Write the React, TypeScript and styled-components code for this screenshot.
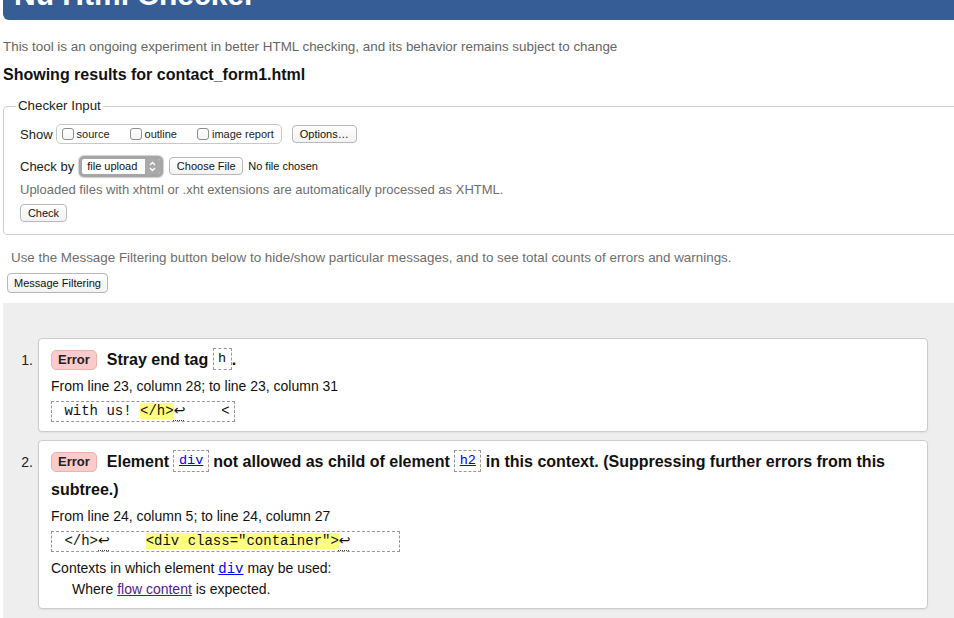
import React from "react";
import styled, { createGlobalStyle } from "styled-components";

const Global = createGlobalStyle`
  html, body { margin: 0; padding: 0; background: #fff; }
  body {
    font-family: "Liberation Sans", Arial, Helvetica, sans-serif;
    color: #1a1a1a;
    overflow: hidden;
  }
`;

const Page = styled.div`
  padding-left: 3px;
  width: 951px;
`;

const Header = styled.header`
  margin-top: -40px;
  height: 60px;
  box-sizing: border-box;
  background: #365d96;
  border-radius: 0 0 0 6px;
  display: flex;
  align-items: flex-end;
  padding: 0 0 10px 11px;
`;

const Title = styled.h1`
  margin: 0;
  font-size: 30px;
  line-height: 30px;
  font-weight: bold;
  color: #fff;
`;

const Intro = styled.p`
  margin: 18px 0 0;
  font-size: 13.4px;
  line-height: 18px;
  color: #666;
`;

const ResultsHeading = styled.h2`
  margin: 9px 0 0;
  font-size: 16px;
  line-height: 20px;
  font-weight: bold;
  color: #111;
`;

const Fieldset = styled.fieldset`
  margin: 13px 0 0;
  width: calc(100% + 4px);
  box-sizing: border-box;
  border: 1px solid #cfcfcf;
  border-radius: 4px;
  padding: 9px 16px 10px;
  min-width: 0;
`;

const Legend = styled.legend`
  font-size: 13.3px;
  line-height: 16px;
  padding: 0 2px;
  margin-left: -4px;
  color: #222;
`;

const Row = styled.div<{ $mt?: number }>`
  display: flex;
  align-items: center;
  height: 22px;
  margin-top: ${(p) => p.$mt ?? 0}px;
`;

const Label = styled.span`
  font-size: 13px;
  color: #222;
  margin-right: 3px;
`;

const Group = styled.span`
  display: inline-flex;
  align-items: center;
  gap: 20px;
  height: 20px;
  box-sizing: border-box;
  border: 1px solid #c8c8c8;
  border-radius: 5px;
  padding: 0 7px 0 5px;
`;

const CheckItem = styled.label`
  display: inline-flex;
  align-items: center;
  gap: 3px;
  font-size: 11px;
  color: #222;
`;

const Box = styled.span`
  display: inline-block;
  width: 12px;
  height: 12px;
  box-sizing: border-box;
  border: 1px solid #8d8d8d;
  border-radius: 3px;
  background: linear-gradient(#fff, #f4f4f4);
`;

const Button = styled.span<{ $w: number; $h?: number; $ml?: number }>`
  display: inline-flex;
  align-items: center;
  justify-content: center;
  box-sizing: border-box;
  width: ${(p) => p.$w}px;
  height: ${(p) => p.$h ?? 18}px;
  margin-left: ${(p) => p.$ml ?? 0}px;
  border: 1px solid #b8b8b8;
  border-radius: 4px;
  background: linear-gradient(#ffffff, #f3f3f3);
  font-size: 11px;
  color: #111;
`;

const SelectBox = styled.span`
  display: inline-flex;
  align-items: center;
  box-sizing: border-box;
  width: 84px;
  height: 21px;
  margin-left: 2px;
  border: 3px solid #a6a6a6;
  border-radius: 5px;
  background: #fff;
  padding-left: 5px;
  font-size: 11px;
  color: #111;
  box-shadow: 0 0 1px 1px rgba(120, 120, 120, 0.35);
`;

const SelectText = styled.span`
  flex: 1;
`;

const Stepper = styled.span`
  display: flex;
  align-items: center;
  justify-content: center;
  width: 15px;
  height: 100%;
  background: #a9a9a9;
  border-radius: 0 2px 2px 0;
`;

const Note = styled.span`
  font-size: 11px;
  color: #111;
  margin-left: 5px;
`;

const Hint = styled.p<{ $mt?: number; $pl?: number; $fs?: number }>`
  margin: ${(p) => p.$mt ?? 0}px 0 0;
  padding-left: ${(p) => p.$pl ?? 0}px;
  font-size: ${(p) => p.$fs ?? 13}px;
  line-height: 18px;
  color: #6e6e6e;
`;

const FilterRow = styled.div`
  margin-top: 6px;
  padding-left: 4px;
  display: flex;
`;

const Results = styled.div`
  margin-top: 10px;
  background: #eeeeee;
  padding: 35px 26px 20px 0;
`;

const List = styled.ol`
  margin: 0;
  padding: 0;
  list-style: none;
  display: flex;
  flex-direction: column;
  gap: 8px;
`;

const Item = styled.li`
  display: flex;
  align-items: flex-start;
`;

const Num = styled.span`
  width: 35px;
  box-sizing: border-box;
  text-align: right;
  padding: 8px 5px 0 0;
  font-size: 14px;
  line-height: 28px;
  color: #222;
`;

const Card = styled.div<{ $pb: number }>`
  flex: 1;
  background: #fff;
  border: 1px solid #cccccc;
  border-radius: 4px;
  padding: 7px 12px ${(p) => p.$pb}px;
  box-shadow: 0 1px 2px rgba(0, 0, 0, 0.06);
`;

const MsgHeading = styled.p`
  margin: 0;
  font-size: 16px;
  line-height: 28px;
  font-weight: bold;
  color: #111;
`;

const Badge = styled.span`
  display: inline-block;
  vertical-align: 1px;
  font-size: 13px;
  line-height: 18px;
  font-weight: bold;
  padding: 0 6px;
  margin-right: 10px;
  border: 1px solid #eab3b0;
  border-radius: 5px;
  background: #fbcaca;
  color: #222;
`;

const CodeBox = styled.code`
  display: inline-block;
  vertical-align: 3px;
  border: 1px dashed #999;
  padding: 0 4.5px;
  font-family: "Liberation Mono", "Courier New", monospace;
  font-size: 13.5px;
  line-height: 20px;
  font-weight: normal;
  color: #111;
`;

const CodeLink = styled.a`
  color: #0000ee;
  text-decoration: underline;
  font-family: "Liberation Mono", "Courier New", monospace;
  font-weight: normal;
`;

const Text = styled.p<{ $mt?: number; $indent?: number }>`
  margin: ${(p) => p.$mt ?? 0}px 0 0;
  padding-left: ${(p) => p.$indent ?? 0}px;
  font-size: 14px;
  line-height: 18px;
  color: #111;
`;

const Visited = styled.a`
  color: #551a8b;
  text-decoration: underline;
`;

const Extract = styled.code`
  display: block;
  width: fit-content;
  margin-top: 6px;
  border: 1px dashed #999;
  padding: 0 4px;
  font-family: "Liberation Mono", "Courier New", monospace;
  font-size: 14px;
  line-height: 19px;
  white-space: pre;
  color: #111;
`;

const Mark = styled.mark`
  background: #ffff80;
  color: #111;
`;

const Lf = styled.span`
  display: inline-block;
  width: 14px;
  font-family: "DejaVu Sans", sans-serif;
  font-size: 14px;
  line-height: 17px;
  vertical-align: top;
  text-decoration: underline dotted #444;
  text-decoration-thickness: 1px;
  text-underline-offset: 5px;
`;

const UpDown = () => (
  <svg width="7" height="11" viewBox="0 0 7 11" fill="none" stroke="#fff" strokeWidth="1.3">
    <path d="M1 4 L3.5 1.5 L6 4" />
    <path d="M1 7 L3.5 9.5 L6 7" />
  </svg>
);

const CheckOpt = ({ label }: { label: string }) => (
  <CheckItem>
    <Box />
    {label}
  </CheckItem>
);

export default function App() {
  return (
    <>
      <Global />
      <Page>
        <Header>
          <Title>Nu Html Checker</Title>
        </Header>
        <Intro>
          This tool is an ongoing experiment in better HTML checking, and its behavior remains subject to change
        </Intro>
        <ResultsHeading>Showing results for contact_form1.html</ResultsHeading>
        <Fieldset>
          <Legend>Checker Input</Legend>
          <Row>
            <Label>Show</Label>
            <Group>
              <CheckOpt label="source" />
              <CheckOpt label="outline" />
              <CheckOpt label="image report" />
            </Group>
            <Button $w={65} $ml={10}>Options…</Button>
          </Row>
          <Row $mt={10}>
            <Label>Check by</Label>
            <SelectBox>
              <SelectText>file upload</SelectText>
              <Stepper>
                <UpDown />
              </Stepper>
            </SelectBox>
            <Button $w={74} $ml={6}>Choose File</Button>
            <Note>No file chosen</Note>
          </Row>
          <Hint $mt={4}>Uploaded files with xhtml or .xht extensions are automatically processed as XHTML.</Hint>
          <Row $mt={3}>
            <Button $w={47}>Check</Button>
          </Row>
        </Fieldset>
        <Hint $mt={14} $pl={8} $fs={13.4}>
          Use the Message Filtering button below to hide/show particular messages, and to see total counts of errors and warnings.
        </Hint>
        <FilterRow>
          <Button $w={101} $h={20}>Message Filtering</Button>
        </FilterRow>
        <Results>
          <List>
            <Item>
              <Num>1.</Num>
              <Card $pb={9}>
                <MsgHeading>
                  <Badge>Error</Badge>Stray end tag <CodeBox>h</CodeBox>.
                </MsgHeading>
                <Text $mt={3}>From line 23, column 28; to line 23, column 31</Text>
                <Extract>
                  {" with us! "}
                  <Mark>{"</h>"}</Mark>
                  <Lf>↩</Lf>
                  {"    <"}
                </Extract>
              </Card>
            </Item>
            <Item>
              <Num>2.</Num>
              <Card $pb={10}>
                <MsgHeading>
                  <Badge>Error</Badge>Element <CodeBox><CodeLink href="#">div</CodeLink></CodeBox> not allowed as child of
                  element <CodeBox><CodeLink href="#">h2</CodeLink></CodeBox> in this context. (Suppressing further errors
                  from this subtree.)
                </MsgHeading>
                <Text $mt={3}>From line 24, column 5; to line 24, column 27</Text>
                <Extract>
                  {" </h>"}
                  <Lf>↩</Lf>
                  {"    "}
                  <Mark>{'<div class="container">'}</Mark>
                  <Lf>↩</Lf>
                  {"     "}
                </Extract>
                <Text $mt={7}>
                  Contexts in which element <CodeLink href="#">div</CodeLink> may be used:
                </Text>
                <Text $mt={2} $indent={21}>
                  Where <Visited href="#">flow content</Visited> is expected.
                </Text>
              </Card>
            </Item>
          </List>
        </Results>
      </Page>
    </>
  );
}
